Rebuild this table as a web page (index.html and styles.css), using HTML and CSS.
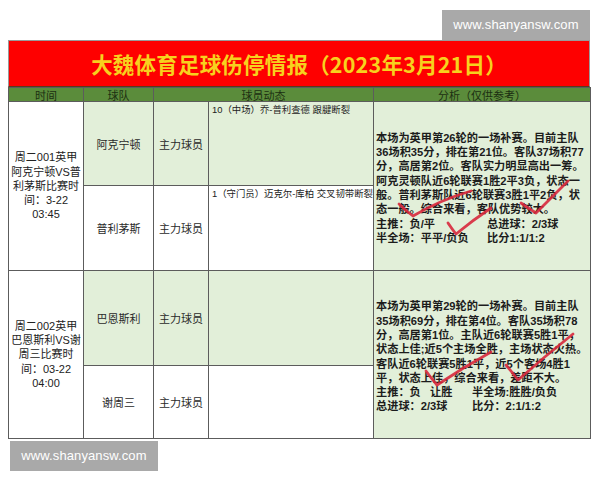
FILE: index.html
```html
<!DOCTYPE html>
<html lang="zh-CN">
<head>
<meta charset="utf-8">
<title>大魏体育足球伤停情报</title>
<link rel="stylesheet" href="styles.css">
</head>
<body>
<div class="page">
  <div class="wm-row wm-row-top"><div class="wm">www.shanyansw.com</div></div>
  <div class="banner">大魏体育足球伤停情报（2023年3月21日）</div>
  <table class="grid">
    <colgroup>
      <col class="c-time"><col class="c-team"><col class="c-role"><col class="c-player"><col class="c-ana">
    </colgroup>
    <thead>
      <tr class="head"><th>时间</th><th>球队</th><th colspan="2">球员动态</th><th>分析（仅供参考）</th></tr>
    </thead>
    <tbody>
      <tr class="r1a">
        <td class="time" rowspan="2">周二001英甲<br>阿克宁顿VS普<br>利茅斯比赛时<br>间：3-22<br>03:45</td>
        <td class="team green">阿克宁顿</td>
        <td class="team green">主力球员</td>
        <td class="player green">10（中场）乔-普利查德 跟腱断裂</td>
        <td class="ana green" rowspan="2">
          <div class="ana-text">本场为英甲第26轮的一场补赛。目前主队<br>36场积35分，排在第21位。客队37场积77<br>分，高居第2位。客队实力明显高出一筹。<br>阿克灵顿队近6轮联赛1胜2平3负，状态一<br>般。普利茅斯队近6轮联赛3胜1平2负，状<br>态一般。综合来看，客队优势较大。
            <div class="pair"><span class="p1">主推：负/平</span><span>总进球：2/3球</span></div>
            <div class="pair"><span class="p1">半全场：平平/负负</span><span>比分1:1/1:2</span></div>
          </div>
          <svg class="marks" viewBox="0 0 217 169" width="217" height="169" aria-hidden="true">
            <path d="M25 102 Q31 108 39 114 Q66 98 97 89"/>
            <path d="M74 121 Q78 127 82 132 Q99 118 117 106"/>
            <path d="M147 101 Q154 106 162 111 Q178 95 194 79"/>
          </svg>
        </td>
      </tr>
      <tr class="r1b">
        <td class="team">普利茅斯</td>
        <td class="team">主力球员</td>
        <td class="player">1（守门员）迈克尔-库柏 交叉韧带断裂</td>
      </tr>
      <tr class="r2a">
        <td class="time" rowspan="2">周二002英甲<br>巴恩斯利VS谢<br>周三比赛时<br>间：03-22<br>04:00</td>
        <td class="team green">巴恩斯利</td>
        <td class="team green">主力球员</td>
        <td class="player green"></td>
        <td class="ana green" rowspan="2">
          <div class="ana-text">本场为英甲第29轮的一场补赛。目前主队<br>35场积69分，排在第4位。客队35场积78<br>分，高居第1位。主队近6轮联赛5胜1平，<br>状态上佳;近5个主场全胜，主场状态火热。<br>客队近6轮联赛5胜1平，近5个客场4胜1<br>平，状态上佳，综合来看，差距不大。
            <div class="pair"><span class="p2"><span class="p2a">主推：负</span>让胜</span><span>半全场:胜胜/负负</span></div>
            <div class="pair"><span class="p2">总进球：2/3球</span><span>比分：2:1/1:2</span></div>
          </div>
          <svg class="marks" viewBox="0 0 217 168" width="217" height="168" aria-hidden="true">
            <path d="M52 100 Q57 107 63 114 Q90 96 117 81"/>
            <path d="M132 94 Q138 101 144 109 Q170 86 199 63"/>
          </svg>
        </td>
      </tr>
      <tr class="r2b">
        <td class="team">谢周三</td>
        <td class="team">主力球员</td>
        <td class="player"></td>
      </tr>
    </tbody>
  </table>
  <div class="wm-row wm-row-bottom"><div class="wm">www.shanyansw.com</div></div>
</div>
</body>
</html>
```

FILE: styles.css
```css
* { box-sizing: border-box; }
html, body { margin: 0; padding: 0; background: #ffffff; }
body {
  font-family: "Liberation Sans", "Noto Sans CJK SC", sans-serif;
  color: #222;
}
.page {
  width: 600px;
  padding: 10px 10px 0 8px;
}
.wm-row { display: flex; }
.wm-row-top { justify-content: flex-end; }
.wm-row-bottom { margin-top: 2px; padding-left: 2px; }
.wm {
  width: 148px;
  height: 30px;
  background: #a9a9a9;
  color: #ffffff;
  font-size: 13px;
  line-height: 30px;
  text-align: center;
  letter-spacing: 0.1px;
}
.banner {
  height: 47px;
  background: #fe0000;
  border: 1px solid #9a9a9a;
  border-bottom: 1px solid #5a3a1a;
  color: #f7d11e;
  font-family: "Noto Sans CJK SC", sans-serif;
  font-weight: 700;
  font-size: 21.5px;
  line-height: 45px;
  text-align: center;
  letter-spacing: 0.2px;
}
.grid {
  width: 582px;
  table-layout: fixed;
  border-collapse: collapse;
}
.c-time { width: 75px; }
.c-team { width: 70px; }
.c-role { width: 55px; }
.c-player { width: 165px; }
.c-ana { width: 217px; }
.grid th, .grid td {
  border: 1px solid #5c5c5c;
  padding: 0;
}
.head th {
  height: 14px;
  background: #5b8c3b;
  color: #1c2f12;
  font-family: "Noto Sans CJK SC", sans-serif;
  font-weight: 400;
  font-size: 11px;
  line-height: 12px;
  text-align: center;
}
.r1a td { height: 84px; }
.r1b td { height: 85px; }
.r2a td { height: 95px; }
.r2b td { height: 73px; }
.green { background: #e2efd9; }
.time {
  background: #ffffff;
  text-align: center;
  vertical-align: middle;
  font-size: 11px;
  line-height: 14.2px;
  color: #222;
  white-space: nowrap;
}
.team {
  text-align: center;
  vertical-align: middle;
  font-size: 11px;
  color: #2a2a2a;
}
.player {
  vertical-align: top;
  font-size: 9.4px;
  line-height: 13px;
  padding: 1px 2px 0 3px !important;
  white-space: nowrap;
  color: #222;
}
.ana {
  position: relative;
  vertical-align: middle;
}
.ana-text {
  padding: 4px 0 0 2px;
  font-size: 11.2px;
  line-height: 14.3px;
  font-weight: 700;
  color: #1c1c1c;
  white-space: nowrap;
}
.pair { display: flex; }
.p1 { width: 111px; }
.p2 { width: 96px; }
.p2a { display: inline-block; width: 54px; }
.marks {
  position: absolute;
  left: 0;
  top: 0;
  pointer-events: none;
}
.marks path {
  fill: none;
  stroke: #d8283c;
  stroke-width: 2.8;
  stroke-linecap: round;
  stroke-linejoin: round;
  opacity: 0.9;
}
```
